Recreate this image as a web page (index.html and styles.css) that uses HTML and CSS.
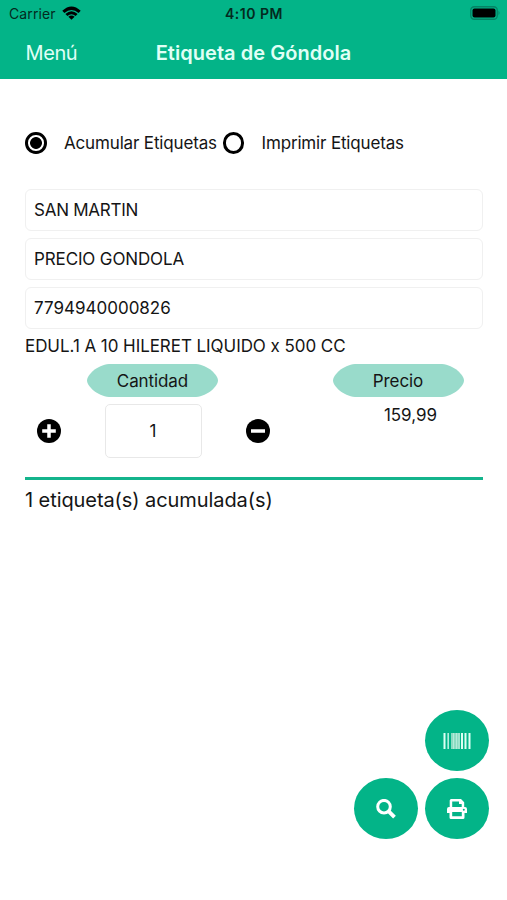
FILE: index.html
```html
<!DOCTYPE html>
<html lang="es">
<head>
<meta charset="utf-8">
<title>Etiqueta de Góndola</title>
<link rel="stylesheet" href="styles.css">
</head>
<body>
<header class="header">
  <div class="status">
    <div class="carrier"><span>Carrier</span>
      <svg class="wifi" viewBox="0 0 19 14"><path d="M0.3 4.8Q9.5-4 18.7 4.8L16.6 6.9Q9.5.9 2.4 6.9Z"/><path d="M3.4 7.9Q9.5 2.4 15.6 7.9L13.6 9.9Q9.5 6.4 5.4 9.9Z"/><path d="M6.4 10.8Q9.5 8.2 12.6 10.8L9.5 13.8Z"/></svg>
    </div>
    <span class="clock">4:10 PM</span>
    <svg class="battery" viewBox="0 0 31 14"><rect x=".75" y=".75" width="26.5" height="12.5" rx="3.5"/><rect class="charge" x="2.5" y="2.5" width="23" height="9" rx="2"/><path class="charge cap" d="M28.5 4.8Q30.5 7 28.5 9.2Z"/></svg>
  </div>
  <nav class="nav"><span class="menu">Menú</span><h1 class="title">Etiqueta de Góndola</h1><span></span></nav>
</header>
<main class="main">
  <div class="options">
    <span class="radio checked"></span><span class="option accumulate">Acumular Etiquetas</span>
    <span class="radio"></span><span class="option print">Imprimir Etiquetas</span>
  </div>
  <div class="fields">
    <div class="field"><span class="branch">SAN MARTIN</span></div>
    <div class="field"><span class="list">PRECIO GONDOLA</span></div>
    <div class="field"><span class="code">7794940000826</span></div>
  </div>
  <p class="product"><span>EDUL.1 A 10 HILERET LIQUIDO x 500 CC</span></p>
  <section class="details">
    <div class="quantity">
      <div class="pill"><svg viewBox="0 0 131 33" preserveAspectRatio="none"><path d="M22 0H109C121 1 131 11 131 16.5C131 22 121 32 109 33H22C10 32 0 22 0 16.5C0 11 10 1 22 0Z"/></svg><span>Cantidad</span></div>
      <div class="stepper">
        <svg class="step" viewBox="0 0 24 24"><circle cx="12" cy="12" r="12"/><path d="M12 5.2V18.8M5.2 12H18.8"/></svg>
        <div class="amount">1</div>
        <svg class="step" viewBox="0 0 24 24"><circle cx="12" cy="12" r="12"/><path d="M5 12H19"/></svg>
      </div>
    </div>
    <div class="price">
      <div class="pill"><svg viewBox="0 0 131 33" preserveAspectRatio="none"><path d="M22 0H109C121 1 131 11 131 16.5C131 22 121 32 109 33H22C10 32 0 22 0 16.5C0 11 10 1 22 0Z"/></svg><span>Precio</span></div>
      <span class="value">159,99</span>
    </div>
  </section>
  <p class="summary"><span>1 etiqueta(s) acumulada(s)</span></p>
</main>
<div class="actions">
  <button class="action scan" aria-label="Escanear"><svg width="28" height="16" viewBox="0 0 28 16"><path fill="#dcfff3" d="M.5 0h2v16h-2zM4.5 0h1.3v16H4.5zM18 0h2v16h-2zM21.5 0h2v16h-2zM25.5 0h2v16h-2z"/><path fill="#8edcc3" d="M8 0h9v16H8z"/><path fill="#b5ecdb" d="M10 0h1v16h-1zM13 0h1v16h-1zM15.5 0h1v16h-1z"/></svg></button>
  <button class="action" aria-label="Buscar"><svg width="20" height="20" viewBox="0 0 20 20"><circle cx="8" cy="7.7" r="6.3" fill="none" stroke="#fff" stroke-width="3"/><path d="M12.5 12.2L18.5 18.2" stroke="#fff" stroke-width="3.8"/></svg></button>
  <button class="action" aria-label="Imprimir"><svg width="20" height="20" viewBox="0 0 20 20"><path fill="#fff" fill-rule="evenodd" d="M4.2 0H14L17.2 3.2V8H18Q20 8 20 10V14H17.5V18.5Q17.5 20 16 20H4Q2.5 20 2.5 18.5V14H0V10Q0 8 2 8H2.7V1.5Q2.7 0 4.2 0ZM5.2 2.6V8H14.7V5H12V2.6ZM5.2 13V17.3H14.8V13ZM16.8 9.8A1 1 0 1 0 16.8 11.8A1 1 0 1 0 16.8 9.8Z"/></svg></button>
</div>
</body>
</html>
```

FILE: styles.css
```css
* { box-sizing: border-box; }
body {
  margin: 0;
  height: 900px;
  display: flex;
  flex-direction: column;
  background: #fff;
  color: #151515;
  font: 17px/20px Inter, sans-serif;
  overflow: hidden;
}
p, h1 { margin: 0; }
svg { display: block; flex: none; }
span { white-space: nowrap; }
.header { height: 79px; background: #03b488; flex: none; }
.status {
  height: 28px;
  padding: 0 6px 0 9px;
  display: grid;
  grid-template-columns: 1fr auto 1fr;
  align-items: center;
  font-size: 14px;
  color: #032a20;
}
.carrier { display: flex; align-items: center; gap: 6px; letter-spacing: 0.1px; }
.wifi { width: 19px; height: 14px; margin-top: -2px; fill: #000; }
.clock { font-weight: 600; letter-spacing: 0.5px; margin-left: -2px; }
.battery { width: 31px; height: 14px; justify-self: end; margin-top: -2px; fill: none; stroke: #058365; stroke-width: 1.3; }
.charge { fill: #000; stroke: none; }
.cap { fill: #058365; }
.nav {
  height: 49px;
  padding: 0 26px;
  display: grid;
  grid-template-columns: 1fr auto 1fr;
  align-items: center;
  color: #e0fff6;
  font-size: 20px;
}
.menu { letter-spacing: -0.4px; margin-left: -0.5px; }
.title { font-size: 20px; font-weight: 600; line-height: 24px; letter-spacing: 0.05px; }
.main { padding: 52px 24.5px 0 25px; flex: 1; }
.options { display: flex; align-items: center; height: 24px; letter-spacing: -0.16px; }
.radio { width: 21.5px; height: 21.5px; border: 3px solid #000; border-radius: 50%; flex: none; }
.checked { background: radial-gradient(circle, #000 5.5px, transparent 6.3px); }
.option { margin-left: 17.5px; }
.accumulate { width: 152px; margin-right: 6.5px; }
.fields { margin-top: 34px; display: grid; gap: 7px; }
.field { height: 42px; border: 1.5px solid #f0f0f0; border-radius: 6px; padding: 0 8px; display: flex; align-items: center; }
.branch { letter-spacing: -0.25px; }
.list { letter-spacing: -0.13px; }
.product { margin-top: 7px; height: 20px; letter-spacing: -0.06px; }
.details { margin-top: 8px; height: 113px; display: flex; justify-content: space-between; }
.quantity { width: 255px; display: flex; flex-direction: column; align-items: center; }
.price { width: 131px; margin-right: 19px; display: flex; flex-direction: column; align-items: center; }
.pill { width: 131px; height: 33px; display: grid; place-items: center; letter-spacing: -0.1px; }
.pill > * { grid-area: 1 / 1; }
.pill svg { width: 131px; height: 33px; fill: #99dbcb; }
.stepper { width: 233px; margin-top: 7px; margin-right: -1px; display: flex; align-items: center; justify-content: space-between; }
.step { width: 24px; height: 24px; }
.step path { stroke: #fff; stroke-width: 3.5; }
.amount { width: 97px; height: 54px; border: 1px solid #e8e8e8; border-radius: 5px; display: grid; place-items: center; }
.value { margin: 8px 0 0 25px; }
.summary { border-top: 3px solid #14b48c; padding-top: 7px; font-size: 20px; line-height: 26px; letter-spacing: -0.08px; }
.actions {
  width: 135px;
  margin: 0 18px 61px auto;
  display: grid;
  grid-template-columns: 64px 64px;
  gap: 7px;
}
.action { width: 64px; height: 61px; border: 0; border-radius: 50%; background: #03b488; padding: 0; display: grid; place-items: center; }
.scan { grid-column: 2; }
```
